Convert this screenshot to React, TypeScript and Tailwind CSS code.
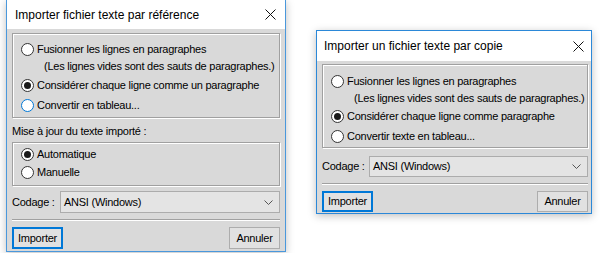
import React from 'react';

const font = "font-['Liberation_Sans',Arial,sans-serif]";

function Radio({ checked = false, focus = false }: { checked?: boolean; focus?: boolean }) {
  return (
    <span
      className={`relative inline-flex h-[13px] w-[13px] shrink-0 items-center justify-center rounded-full border bg-white ${
        focus ? 'border-[#0078d7]' : 'border-[#333333]'
      }`}
    >
      {checked && <span className="h-[7px] w-[7px] rounded-full bg-[#1a1a1a]" />}
    </span>
  );
}

function Option({ label, checked, focus, h = 'h-[20px]' }: { label: string; checked?: boolean; focus?: boolean; h?: string }) {
  return (
    <div className={`flex items-center gap-[3px] pl-[8px] ${h}`}>
      <Radio checked={checked} focus={focus} />
      <span>{label}</span>
    </div>
  );
}

function Close() {
  return (
    <svg width="11" height="11" viewBox="0 0 11 11" className="shrink-0">
      <path d="M0.5 0.5 L10.5 10.5 M10.5 0.5 L0.5 10.5" stroke="#111" strokeWidth="1" />
    </svg>
  );
}

function Combo({ h }: { h: string }) {
  return (
    <div className={`flex flex-1 items-center justify-between border border-[#acacac] bg-[#e4e4e4] pl-[3px] pr-[6px] ${h}`}>
      <span>ANSI (Windows)</span>
      <svg width="9" height="5" viewBox="0 0 9 5">
        <path d="M0.5 0.5 L4.5 4.5 L8.5 0.5" stroke="#555" strokeWidth="1" fill="none" />
      </svg>
    </div>
  );
}

function Buttons({ h }: { h: string }) {
  return (
    <div className="flex justify-between">
      <button className={`w-[51px] border-2 border-[#0078d7] bg-[#e1e1e1] ${h}`}>Importer</button>
      <button className={`w-[51px] border border-[#adadad] bg-[#e1e1e1] ${h}`}>Annuler</button>
    </div>
  );
}

function Separator({ mt }: { mt: string }) {
  return <div className={`h-[2px] border-t border-[#a0a0a0] border-b border-b-white ${mt}`} />;
}

const box = 'border border-[#a0a0a0] shadow-[inset_1px_1px_0_#fff,1px_1px_0_#fff]';

export default function App() {
  return (
    <div className={`relative h-[253px] w-[600px] overflow-hidden bg-white text-[11px] tracking-[-0.25px] text-black ${font}`}>
      {/* Left window */}
      <div className="absolute left-[6px] top-0 flex h-[252px] w-[280px] flex-col border-x border-b border-[#4a98dc] bg-[#d9d9d9] shadow-[0_2px_8px_rgba(0,0,0,0.25)]">
        <div className="flex h-[29px] items-center justify-between bg-white pl-[8px] pr-[9px] text-[12px] tracking-normal">
          <span>Importer fichier texte par référence</span>
          <Close />
        </div>
        <div className="flex flex-col pl-[5px] pr-[5px] pt-[4px]">
          <div className={`${box} h-[85px] pt-[6px]`}>
            <Option label="Fusionner les lignes en paragraphes" h="h-[18px]" />
            <div className="h-[17px] pl-[31px] leading-[17px]">(Les lignes vides sont des sauts de paragraphes.)</div>
            <Option label="Considérer chaque ligne comme un paragraphe" checked />
            <Option label="Convertir en tableau..." focus />
          </div>
          <div className="flex h-[24px] items-center pt-[3px]">Mise à jour du texte importé :</div>
          <div className={`${box} h-[44px] pt-[2px]`}>
            <Option label="Automatique" checked h="h-[18px]" />
            <Option label="Manuelle" h="h-[18px]" />
          </div>
          <div className="mt-[5px] flex items-center">
            <span className="w-[48px]">Codage :</span>
            <Combo h="h-[22px]" />
          </div>
          <Separator mt="mt-[6px]" />
          <div className="mt-[6px]">
            <Buttons h="h-[22px]" />
          </div>
        </div>
      </div>

      {/* Right window */}
      <div className="absolute left-[316px] top-[30px] flex h-[184px] w-[276px] flex-col border border-[#2b88d8] bg-[#d9d9d9] shadow-[0_2px_8px_rgba(0,0,0,0.25)]">
        <div className="flex h-[30px] items-center justify-between bg-white pl-[7px] pr-[7px] text-[12px] tracking-normal">
          <span>Importer un fichier texte par copie</span>
          <Close />
        </div>
        <div className="flex flex-col pl-[5px] pr-[3px] pt-[3px]">
          <div className={`${box} h-[84px] pt-[7px]`}>
            <Option label="Fusionner les lignes en paragraphes" h="h-[18px]" />
            <div className="h-[17px] pl-[31px] leading-[17px]">(Les lignes vides sont des sauts de paragraphes.)</div>
            <Option label="Considérer chaque ligne comme paragraphe" h="h-[19px]" checked />
            <Option label="Convertir texte en tableau..." />
          </div>
          <div className="mt-[8px] flex items-center">
            <span className="w-[47px]">Codage :</span>
            <Combo h="h-[21px]" />
          </div>
          <Separator mt="mt-[6px]" />
          <div className="mt-[6px]">
            <Buttons h="h-[21px]" />
          </div>
        </div>
      </div>
    </div>
  );
}
